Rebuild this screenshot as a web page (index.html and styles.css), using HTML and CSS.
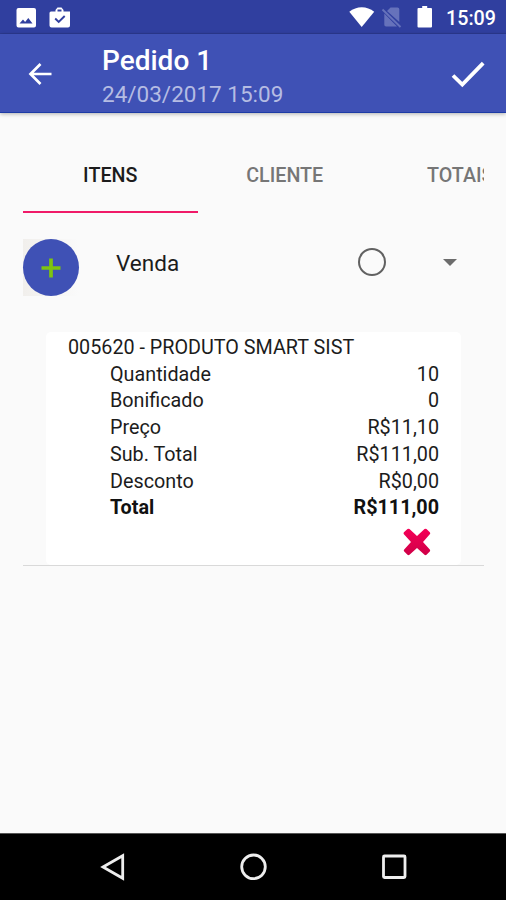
FILE: index.html
```html
<!DOCTYPE html>
<html lang="pt-BR">
<head>
<meta charset="utf-8">
<title>Pedido 1</title>
<link rel="stylesheet" href="styles.css">
</head>
<body>
<div class="screen">
  <header class="status">
    <svg class="status-left" width="56" height="24" viewBox="0 0 56 24">
      <path fill="#fff" fill-rule="evenodd" d="M2.500 2H18a2 2 0 0 1 2 2v15.500a2 2 0 0 1-2 2H2.500a2 2 0 0 1-2-2V4a2 2 0 0 1 2-2zM3.500 17.500h13l-4.200-5.500-3.200 4-2.100-2.500z"/>
      <path fill="#fff" fill-rule="evenodd" d="M35 5.500h4.500V4l2-2.500h4l2 2.500v1.500H54V19.500a2 2 0 0 1-2 2H35.500a2 2 0 0 1-2-2V7a1.500 1.500 0 0 1 1.500-1.500zM41.500 5.500h4V3.500h-4z"/>
      <path fill="none" stroke="#303f9f" stroke-width="1.900" d="M39.200 12.500l3.500 3.500 6-6"/>
    </svg>
    <svg class="status-right" width="84" height="24" viewBox="0 0 84 24">
      <path fill="#fff" d="M.3 6.800C7.500.6 18 .6 25.200 6.800L12.700 22z"/>
      <path fill="#6672bb" d="M41.500 2.500H48.500a1.800 1.800 0 0 1 1.800 1.800V17L38 6zM35.300 8.500L48 21.500H37.100a1.800 1.800 0 0 1-1.800-1.800z"/>
      <path stroke="#6672bb" stroke-width="1.900" d="M33.500 4.500l18 17.500"/>
      <path fill="#fff" d="M73.200 1h5v2H82a1 1 0 0 1 1 1v17.500a1 1 0 0 1-1 1H69.500a1 1 0 0 1-1-1V4a1 1 0 0 1 1-1h3.700z"/>
    </svg>
    <time class="clock">15:09</time>
  </header>
  <div class="toolbar">
    <svg class="back" width="24" height="24" viewBox="0 0 24 24"><path d="M23.500 12H3M12.500 2L2.500 12l10 10"/></svg>
    <div class="headings">
      <h1 class="title">Pedido 1</h1>
      <p class="subtitle">24/03/2017 15:09</p>
    </div>
    <svg class="done" width="34" height="28" viewBox="0 0 34 28"><path d="M2 15.500l9.300 9L32.200 3.200"/></svg>
  </div>
  <main class="content">
    <nav class="tabs">
      <span class="tab active">ITENS</span>
      <span class="tab">CLIENTE</span>
      <span class="tab last">TOTAIS</span>
    </nav>
    <div class="sale">
      <div class="add-box"><button class="add" aria-label="Adicionar"><svg width="20" height="20" viewBox="0 0 20 20"><path d="M10 .5v19M.5 10h19"/></svg></button></div>
      <span class="kind">Venda</span>
      <span class="radio"></span>
      <span class="caret"></span>
    </div>
    <section class="list">
      <article class="card">
        <h2 class="product">005620 - PRODUTO SMART SIST</h2>
        <dl class="details">
          <div class="row"><dt>Quantidade</dt><dd>10</dd></div>
          <div class="row"><dt>Bonificado</dt><dd>0</dd></div>
          <div class="row"><dt>Preço</dt><dd>R$11,10</dd></div>
          <div class="row"><dt>Sub. Total</dt><dd>R$111,00</dd></div>
          <div class="row"><dt>Desconto</dt><dd>R$0,00</dd></div>
          <div class="row total"><dt>Total</dt><dd>R$111,00</dd></div>
        </dl>
        <svg class="remove" width="28" height="28" viewBox="0 0 28 28">
          <defs><linearGradient id="red" x1="0" y1="0" x2="0" y2="1"><stop offset="0" stop-color="#f50057"/><stop offset="1" stop-color="#cf0047"/></linearGradient></defs>
          <path fill="url(#red)" d="M6.500 1L14 8 21.500 1q1-.7 2 0l3.300 3.300q1 1 0 2L20 14l6.800 7.500q.8 1 0 2l-3.300 3.300q-1 .8-2 0L14 20l-7.500 6.800q-1 .8-2 0L1.200 23.500q-1-1 0-2L8 14 .9 6.300q-.8-1 0-2L4.500 1q1-.7 2 0z"/>
        </svg>
      </article>
    </section>
  </main>
  <footer class="navbar">
    <svg width="28" height="30" viewBox="0 0 28 30"><path d="M4 15L23.700 3.700V26.300z"/></svg>
    <svg width="28" height="30" viewBox="0 0 28 30"><circle cx="13.500" cy="14.800" r="11.800"/></svg>
    <svg width="28" height="30" viewBox="0 0 28 30"><rect x="3.500" y="4" width="21.500" height="21.500" rx="1"/></svg>
  </footer>
</div>
</body>
</html>
```

FILE: styles.css
```css
* { box-sizing: border-box; }
body { margin: 0; font-family: Roboto, "Liberation Sans", sans-serif; color: #1c1c1c; }
h1, h2, p, dl, dd { margin: 0; font-weight: inherit; }
svg { display: block; flex: none; }

.screen { width: 506px; height: 900px; display: flex; flex-direction: column; background: #fafafa; overflow: hidden; }

.status { height: 34px; flex: none; display: flex; align-items: center; padding: 0 11px 0 15.500px; background: #303f9f; border-bottom: 1px solid #2c3a92; }
.status-left { margin-top: 3px; }
.status-right { margin: 1px 0 0 auto; }
.clock { width: 49px; margin: 4px 0 0 13px; color: #fff; font-size: 19.700px; font-weight: 500; line-height: 24px; white-space: nowrap; }

.toolbar { height: 79px; flex: none; display: flex; align-items: flex-start; padding: 0 21px 0 28px; background: #3f51b5; border-bottom: 1px solid #1d3ba6; box-shadow: 0 1px 4px rgba(0, 0, 0, .3); }
.back { margin-top: 28px; }
.back path { fill: none; stroke: #fff; stroke-width: 2.700; }
.headings { margin-left: 50px; flex: 1; padding-top: 10px; }
.title { font-size: 28px; line-height: 33px; font-weight: 500; color: #fff; }
.subtitle { font-size: 22.500px; line-height: 26px; margin-top: 4px; color: #b5bce3; }
.done { margin-top: 26px; }
.done path { fill: none; stroke: #fff; stroke-width: 3.800; }

.content { flex: 1; padding: 34px 22px 0 23px; }
.tabs { display: flex; height: 67px; overflow: hidden; }
.tab { flex: none; width: 174.500px; height: 66px; line-height: 58px; text-align: center; font-size: 19.700px; font-weight: 500; color: #767676; }
.tab.active { color: #1c1c1c; border-bottom: 2px solid #f01a68; }
.tab.last { text-align: left; padding-left: 55px; }

.sale { display: flex; align-items: flex-start; padding-top: 25px; height: 118px; }
.add-box { width: 56px; height: 57px; background: linear-gradient(90deg, #f1efec, #fafafa); }
.add { display: flex; align-items: center; justify-content: center; width: 56px; height: 57px; padding: 0; border: 0; border-radius: 50%; background: #3f51b5; }
.add path { stroke: #7ec410; stroke-width: 3.700; }
.kind { margin: 10px 0 0 37px; width: 242px; font-size: 22.500px; line-height: 28px; }
.radio { width: 28px; height: 28px; margin-top: 9px; border: 2.500px solid #616161; border-radius: 50%; }
.caret { margin: 20px 0 0 57px; border: 7px solid transparent; border-top-color: #6c6c6c; border-bottom: 0; }

.list { border-bottom: 1px solid #d9d9d9; padding: 0 23px; }
.card { height: 233px; padding: 3px 22px 0; background: #fff; border-radius: 5px; }
.product { font-size: 19.750px; line-height: 26.700px; white-space: nowrap; }
.details { padding-left: 42px; }
.row { display: flex; justify-content: space-between; font-size: 19.750px; line-height: 26.700px; }
.total { font-weight: 700; color: #111; }
.remove { margin: 6px 8px 0 auto; }

.navbar { height: 67px; flex: none; display: flex; justify-content: space-between; align-items: center; padding: 0 98px 0 99px; background: #000; border-top: 1px solid #555; }
.navbar svg { fill: none; stroke: #eee; stroke-width: 2.800; }
```
